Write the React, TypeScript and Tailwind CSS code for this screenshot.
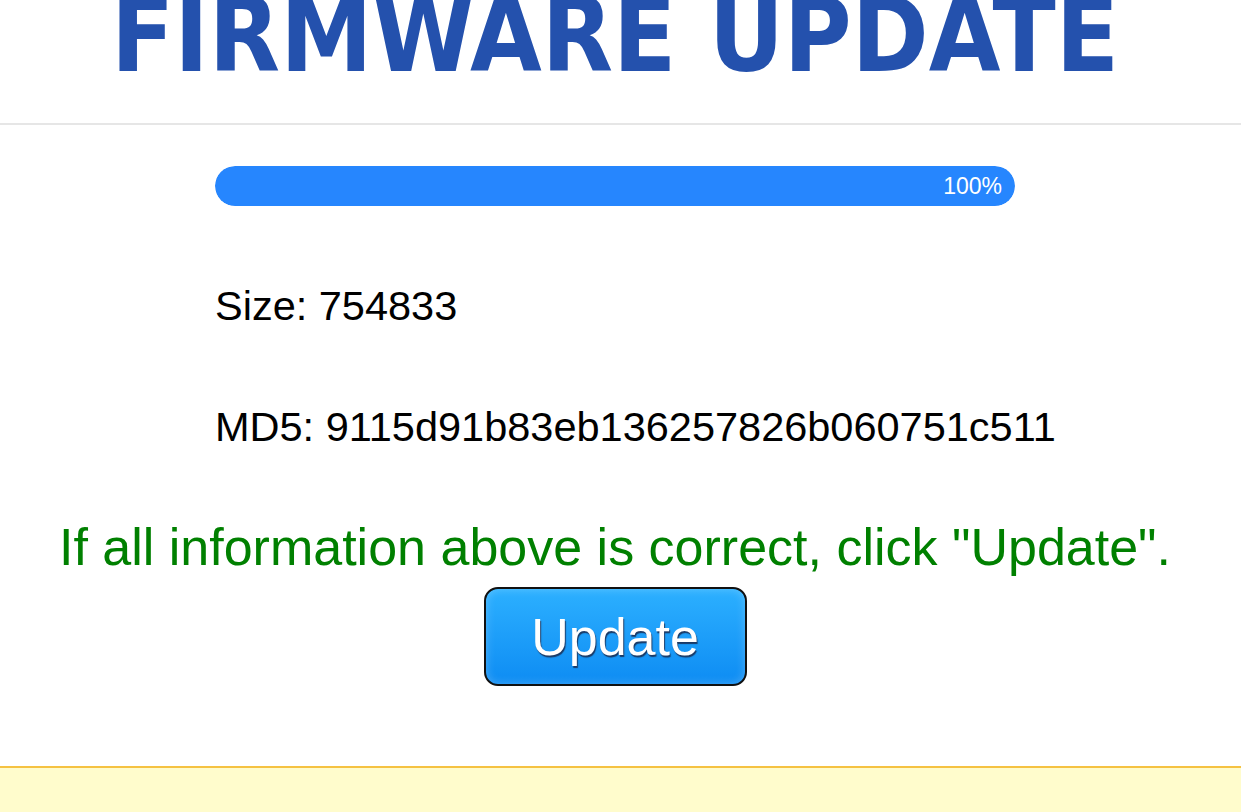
import React from "react";

export default function App() {
  const progress = 100;
  return (
    <div className="min-h-[812px] bg-white flex flex-col" style={{ fontFamily: '"Liberation Sans", Arial, sans-serif' }}>
      {/* Header */}
      <div className="h-[125px] border-b-2 border-[#e6e6e6] overflow-hidden">
        <div className="w-[1230px] flex justify-center">
          <h1
            className="mt-[-16px] text-[103px] leading-none font-bold text-[#2451ad] whitespace-nowrap [font-stretch:condensed]"
            style={{ fontFamily: '"DejaVu Sans Condensed", "DejaVu Sans", sans-serif' }}
          >
            FIRMWARE UPDATE
          </h1>
        </div>
      </div>

      {/* Main */}
      <div className="w-[1230px] flex flex-col items-center">
        <div className="w-[800px] mt-[41px]">
          <div className="h-[40px] rounded-full bg-[#e9eef5] overflow-hidden">
            <div
              className="h-full rounded-full bg-[#2686fe] flex items-center justify-end pr-[13px] text-white text-[23px]"
              style={{ width: `${progress}%` }}
            >
              {progress}%
            </div>
          </div>

          <p className="mt-[76px] text-[41.5px] leading-[48px] text-black whitespace-nowrap">Size: 754833</p>
          <p className="mt-[73px] text-[41.5px] leading-[48px] text-black whitespace-nowrap">MD5: 9115d91b83eb136257826b060751c511</p>
        </div>

        <p className="mt-[66px] text-[52px] leading-[60px] text-[#008000] whitespace-nowrap">
          If all information above is correct, click "Update".
        </p>

        <button className="mt-[10px] w-[263px] h-[99px] rounded-[14px] border-2 border-[#111] bg-gradient-to-b from-[#2cb0ff] to-[#0d8cf3] shadow-[inset_0_0_10px_rgba(255,255,255,0.25)] text-white text-[52px] leading-none [text-shadow:1px_2px_1px_#1a3a66]">
          Update
        </button>
      </div>

      {/* Footer */}
      <div className="mt-[80px] flex-1 border-t-2 border-[#f5c242] bg-[#fffccc]"></div>
    </div>
  );
}
